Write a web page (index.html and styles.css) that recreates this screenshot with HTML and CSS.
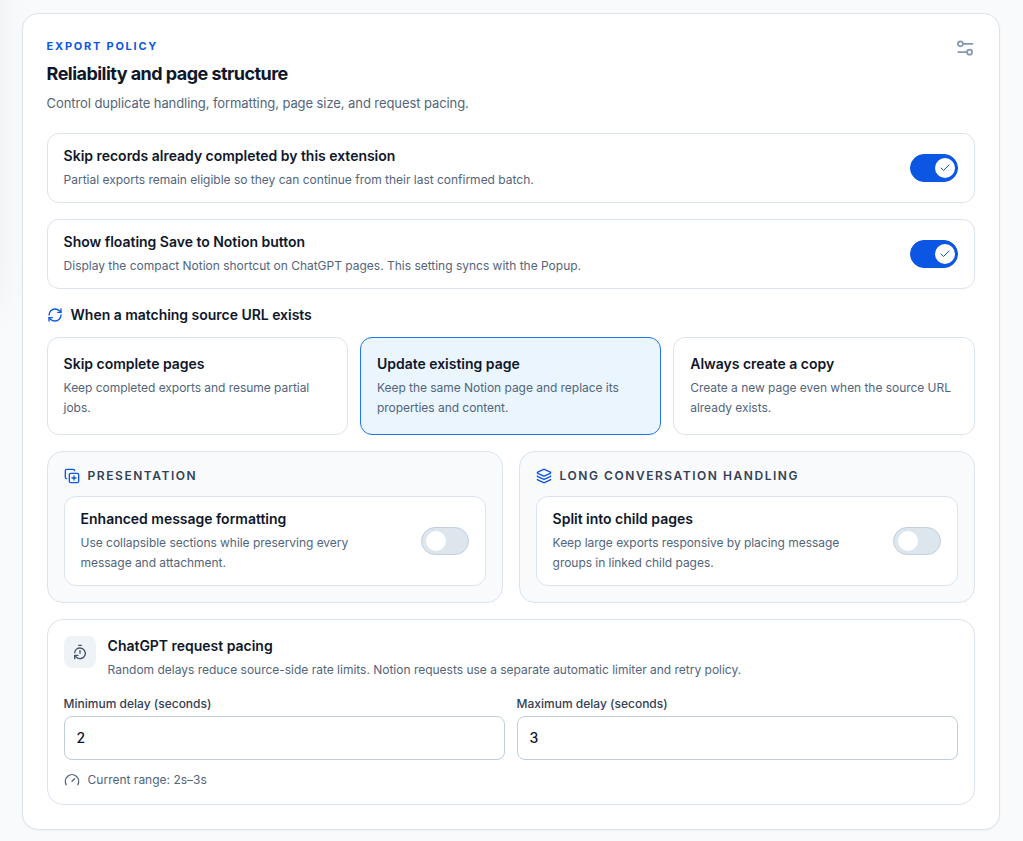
FILE: index.html
```
<!DOCTYPE html>
<html lang="en">
<head>
    <meta charset="UTF-8">
    <meta name="viewport" content="width=device-width, initial-scale=1.0">
    <title>Export policy</title>
    <link rel="stylesheet" href="styles.css">
</head>
<body>
    <main class="policy-card">
        <header class="policy-header">
            <div>
                <p class="eyebrow">Export policy</p>
                <h2>Reliability and page structure</h2>
                <p class="subtitle">Control duplicate handling, formatting, page size, and request pacing.</p>
            </div>
            <svg class="icon settings-icon" viewBox="0 0 24 24">
                <path d="M14 17H4M21 7H10"/>
                <circle cx="17.5" cy="17" r="3"/>
                <circle cx="6.5" cy="7" r="3"/>
            </svg>
        </header>

        <label class="setting-row">
            <span class="setting-text">
                <strong>Skip records already completed by this extension</strong>
                <small>Partial exports remain eligible so they can continue from their last confirmed batch.</small>
            </span>
            <input type="checkbox" class="switch-input" checked>
            <span class="switch">
                <span class="knob"><svg class="icon" viewBox="0 0 24 24"><path d="M20 6 9 17l-5-5"/></svg></span>
            </span>
        </label>

        <label class="setting-row">
            <span class="setting-text">
                <strong>Show floating Save to Notion button</strong>
                <small>Display the compact Notion shortcut on ChatGPT pages. This setting syncs with the Popup.</small>
            </span>
            <input type="checkbox" class="switch-input" checked>
            <span class="switch">
                <span class="knob"><svg class="icon" viewBox="0 0 24 24"><path d="M20 6 9 17l-5-5"/></svg></span>
            </span>
        </label>

        <section class="match-section">
            <h3 class="match-title">
                <svg class="icon" viewBox="0 0 24 24">
                    <path d="M3 12a9 9 0 0 1 9-9 9.75 9.75 0 0 1 6.74 2.74L21 8"/>
                    <path d="M21 3v5h-5"/>
                    <path d="M21 12a9 9 0 0 1-9 9 9.75 9.75 0 0 1-6.74-2.74L3 16"/>
                    <path d="M8 16H3v5"/>
                </svg>
                When a matching source URL exists
            </h3>
            <div class="options">
                <button type="button" class="option">
                    <strong>Skip complete pages</strong>
                    <small>Keep completed exports and resume partial jobs.</small>
                </button>
                <button type="button" class="option selected">
                    <strong>Update existing page</strong>
                    <small>Keep the same Notion page and replace its properties and content.</small>
                </button>
                <button type="button" class="option">
                    <strong>Always create a copy</strong>
                    <small>Create a new page even when the source URL already exists.</small>
                </button>
            </div>
        </section>

        <div class="panels">
            <section class="panel">
                <h3 class="panel-title">
                    <svg class="icon" viewBox="0 0 24 24">
                        <path d="M15 12v6M12 15h6"/>
                        <rect width="14" height="14" x="8" y="8" rx="2"/>
                        <path d="M4 16c-1.1 0-2-.9-2-2V4c0-1.1.9-2 2-2h10c1.1 0 2 .9 2 2"/>
                    </svg>
                    Presentation
                </h3>
                <label class="setting-row">
                    <span class="setting-text">
                        <strong>Enhanced message formatting</strong>
                        <small>Use collapsible sections while preserving every message and attachment.</small>
                    </span>
                    <input type="checkbox" class="switch-input">
                    <span class="switch"><span class="knob"></span></span>
                </label>
            </section>
            <section class="panel">
                <h3 class="panel-title">
                    <svg class="icon" viewBox="0 0 24 24">
                        <path d="M12.83 2.18a2 2 0 0 0-1.66 0L2.6 6.08a1 1 0 0 0 0 1.83l8.58 3.91a2 2 0 0 0 1.66 0l8.58-3.9a1 1 0 0 0 0-1.83z"/>
                        <path d="M2 12a1 1 0 0 0 .58.91l8.6 3.91a2 2 0 0 0 1.65 0l8.58-3.9A1 1 0 0 0 22 12"/>
                        <path d="M2 17a1 1 0 0 0 .58.91l8.6 3.91a2 2 0 0 0 1.65 0l8.58-3.9A1 1 0 0 0 22 17"/>
                    </svg>
                    Long conversation handling
                </h3>
                <label class="setting-row">
                    <span class="setting-text">
                        <strong>Split into child pages</strong>
                        <small>Keep large exports responsive by placing message groups in linked child pages.</small>
                    </span>
                    <input type="checkbox" class="switch-input">
                    <span class="switch"><span class="knob"></span></span>
                </label>
            </section>
        </div>

        <section class="pacing">
            <div class="pacing-header">
                <span class="pacing-icon">
                    <svg class="icon" viewBox="0 0 24 24">
                        <path d="M10 2h4M12 14v-4"/>
                        <path d="M4 13a8 8 0 0 1 8-7 8 8 0 1 1-5.3 14L4 17.6"/>
                        <path d="M9 17H4v5"/>
                    </svg>
                </span>
                <div class="setting-text">
                    <strong>ChatGPT request pacing</strong>
                    <small>Random delays reduce source-side rate limits. Notion requests use a separate automatic limiter and retry policy.</small>
                </div>
            </div>
            <div class="fields">
                <label class="field">
                    Minimum delay (seconds)
                    <input type="text" inputmode="numeric" value="2">
                </label>
                <label class="field">
                    Maximum delay (seconds)
                    <input type="text" inputmode="numeric" value="3">
                </label>
            </div>
            <p class="range">
                <svg class="icon" viewBox="0 0 24 24">
                    <path d="m12 14 4-4"/>
                    <path d="M3.34 19a10 10 0 1 1 17.32 0"/>
                </svg>
                Current range: 2s–3s
            </p>
        </section>
    </main>
</body>
</html>
```
FILE: styles.css
```
* {
    margin: 0;
    padding: 0;
    box-sizing: border-box;
}

body {
    font-family: Inter, "Liberation Sans", sans-serif;
    min-height: 100vh;
    padding: 13px 23.4px 11px 21.6px;
    color: #0f172a;
    background: #f9fafc;
}

/* soft shadow of the side menu that sits left of the page */
body::before {
    content: "";
    position: absolute;
    z-index: -1;
    top: -100px;
    left: -60px;
    width: 40px;
    height: 390px;
    box-shadow: 0 18px 50px rgba(15, 23, 42, 0.12);
}

.icon {
    flex-shrink: 0;
    width: 16px;
    height: 16px;
    fill: none;
    stroke: currentColor;
    stroke-width: 2;
    stroke-linecap: round;
    stroke-linejoin: round;
}

.policy-card {
    display: flex;
    flex-direction: column;
    gap: 16px;
    padding: 24px;
    border: 1px solid #dbe4ec;
    border-radius: 16px;
    background: #fff;
    box-shadow: 0 1px 3px rgba(15, 23, 42, 0.04);
}

.policy-header {
    display: flex;
    justify-content: space-between;
    height: 79px;
}

.eyebrow {
    font-size: 11px;
    font-weight: 700;
    line-height: 16px;
    letter-spacing: 1.76px;
    text-transform: uppercase;
    color: #0b57e3;
}

.policy-header h2 {
    margin-top: 6px;
    font-size: 18px;
    font-weight: 700;
    line-height: 28px;
    letter-spacing: -0.54px;
}

.subtitle {
    margin-top: 4px;
    font-size: 13px;
    line-height: 23px;
    letter-spacing: -0.08px;
    color: #52657c;
}

.settings-icon {
    width: 20px;
    height: 20px;
    color: #8496b0;
}

/* Setting rows */
.setting-row {
    display: flex;
    align-items: center;
    justify-content: space-between;
    gap: 24px;
    padding: 12px 16px;
    border: 1px solid #dbe4ec;
    border-radius: 12px;
    background: #fff;
    cursor: pointer;
}

.setting-text strong,
.option strong {
    display: block;
    font-size: 14px;
    font-weight: 600;
    line-height: 20px;
    letter-spacing: -0.02px;
}

.setting-text small,
.option small {
    display: block;
    margin-top: 4px;
    font-size: 12px;
    line-height: 20px;
    letter-spacing: -0.01px;
    color: #52657c;
}

.option small,
.panel small {
    letter-spacing: -0.04px;
}

.switch-input {
    position: absolute;
    opacity: 0;
}

.switch {
    flex-shrink: 0;
    width: 48px;
    height: 28px;
    padding: 3px 4px;
    border: 1px solid #c2d0de;
    border-radius: 14px;
    background: #dde5ed;
}

.knob {
    display: flex;
    align-items: center;
    justify-content: center;
    width: 20px;
    height: 20px;
    border-radius: 50%;
    background: #fff;
    color: #0b57e3;
}

.knob .icon {
    width: 12px;
    height: 12px;
}

.switch-input:checked + .switch {
    border-color: #0b57e3;
    background: #0b57e3;
}

.switch-input:checked + .switch .knob {
    transform: translateX(20px);
}

/* Matching options */
.match-title {
    display: flex;
    align-items: center;
    gap: 8px;
    margin-bottom: 12px;
    font-size: 14px;
    font-weight: 600;
    line-height: 20px;
    letter-spacing: -0.03px;
}

.match-title .icon,
.panel-title .icon {
    color: #0b57e3;
}

.options {
    display: grid;
    grid-template-columns: repeat(3, 1fr);
    gap: 12px;
}

.option {
    padding: 16px;
    border: 1px solid #dbe4ec;
    border-radius: 12px;
    background: #fff;
    color: inherit;
    font-family: inherit;
    text-align: left;
    cursor: pointer;
}

.option.selected {
    border-color: #1f75f0;
    background: #eaf5fe;
}

/* Panels */
.panels {
    display: grid;
    grid-template-columns: repeat(2, 1fr);
    gap: 16px;
}

.panel {
    padding: 16px;
    border: 1px solid #dbe4ec;
    border-radius: 16px;
    background: #f9fafc;
}

.panel-title {
    display: flex;
    align-items: center;
    gap: 8px;
    margin-bottom: 12px;
    font-size: 12px;
    font-weight: 600;
    line-height: 16px;
    letter-spacing: 1.54px;
    text-transform: uppercase;
    color: #334155;
}

/* Request pacing */
.pacing {
    padding: 16px;
    border: 1px solid #dbe4ec;
    border-radius: 16px;
}

.pacing-header {
    display: flex;
    gap: 12px;
    margin-bottom: 16px;
}

.pacing-icon {
    display: flex;
    align-items: center;
    justify-content: center;
    width: 32px;
    height: 32px;
    border-radius: 8px;
    background: #eef3f7;
    color: #475569;
}

.fields {
    display: grid;
    grid-template-columns: repeat(2, 1fr);
    gap: 12px;
}

.field {
    font-size: 12px;
    font-weight: 500;
    line-height: 16px;
    color: #334155;
}

.field input {
    display: block;
    width: 100%;
    height: 44px;
    margin-top: 4px;
    padding: 0 12px 1px;
    border: 1px solid #bfcedd;
    border-radius: 8px;
    background: #fff;
    color: #0f172a;
    font-family: inherit;
    font-size: 14px;
    font-weight: 500;
}

.range {
    display: flex;
    align-items: center;
    gap: 8px;
    margin-top: 12px;
    font-size: 12px;
    line-height: 16px;
    color: #52657c;
}
```
